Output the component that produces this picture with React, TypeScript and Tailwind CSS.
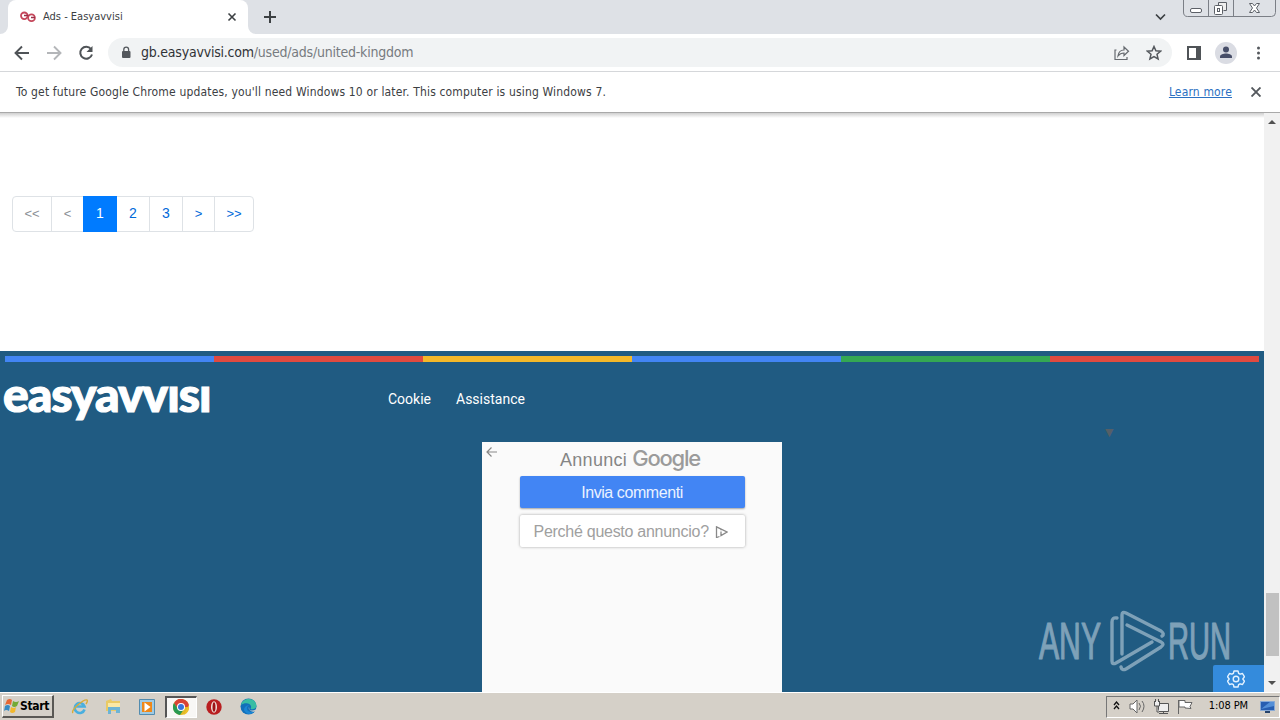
import React from "react";

const pages = [
  { label: "<<", look: "w-10 rounded-l-[4px] border-[#dee2e6] text-[13px] text-[#8b9096]" },
  { label: "<", look: "w-[33px] border-[#dee2e6] text-[13px] text-[#8b9096]" },
  { label: "1", look: "z-10 w-[34px] border-[#007bff] bg-[#007bff] text-[14px] text-white" },
  { label: "2", look: "w-[34px] border-[#dee2e6] text-[14px] text-[#0069d9]" },
  { label: "3", look: "w-[34px] border-[#dee2e6] text-[14px] text-[#0069d9]" },
  { label: ">", look: "w-[33px] border-[#dee2e6] text-[13px] text-[#0069d9]" },
  { label: ">>", look: "w-10 rounded-r-[4px] border-[#dee2e6] text-[13px] text-[#0069d9]" },
];

const stripes = ["bg-[#4285f4]", "bg-[#e04a3f]", "bg-[#f4b829]", "bg-[#4285f4]", "bg-[#34a853]", "bg-[#e04a3f]"];

function TabStrip() {
  return (
    <div className="flex h-[34px] shrink-0 bg-[#dee1e6] pl-2">
      <div className="relative flex h-[34px] w-[240px] items-center rounded-t-lg bg-white pl-3">
        <svg className="absolute -left-2 bottom-0" width="8" height="8"><path d="M8 0A8 8 0 0 1 0 8H8Z" fill="#fff" /></svg>
        <svg className="absolute -right-2 bottom-0" width="8" height="8"><path d="M0 0A8 8 0 0 0 8 8H0Z" fill="#fff" /></svg>
        <svg width="16" height="12" viewBox="0 0 16 12" fill="none" stroke="#c5475b" strokeWidth="1.800">
          <circle cx="4.300" cy="4.800" r="3.300" />
          <circle cx="11.500" cy="6.800" r="3.400" />
          <path d="M4 4.500h4.500M11 6.500h4" stroke="#9a3048" strokeWidth="1.500" />
        </svg>
        <span className="ml-[7px] w-[180px] font-['DejaVu_Sans_Condensed','Noto_Sans',sans-serif] text-[11px] whitespace-nowrap text-[#3c4043]">Ads - Easyavvisi</span>
        <svg className="ml-1" width="10" height="10" viewBox="0 0 10 10" stroke="#3c4043" strokeWidth="1.6"><path d="M1.500 1.500l7 7M8.500 1.500l-7 7" /></svg>
      </div>
      <svg className="mt-[11px] ml-4" width="12" height="12" stroke="#3c4043" strokeWidth="2"><path d="M6 0v12M0 6h12" /></svg>
      <svg className="mt-[13px] mr-px ml-auto" width="11" height="8" fill="none" stroke="#3c4043" strokeWidth="1.7"><path d="M1 1.500l4.500 4.500L10 1.500" /></svg>
      <svg className="mr-1 ml-4" width="93" height="18" fill="none" stroke="#7b7f86">
        <path d="M.5 0v12q0 4.500 4 4.500h84q4 0 4-4V0M25.500 0v16M50.500 0v16" />
        <g stroke="#5c6067">
          <rect x="7.500" y="8.500" width="11" height="4" rx="1.500" fill="#fff" />
          <path d="M35.500 5.500V2.500h8v8h-3" fill="#eee" />
          <rect x="31.500" y="5.500" width="8" height="9" rx="1" fill="#fff" />
          <rect x="34.500" y="8.500" width="2" height="3" />
          <path d="M66.500 3.500h3l2 2.500 2-2.500h3l-3 4.500 3 4.500h-3l-2-2.500-2 2.500h-3l3-4.500z" fill="#fff" />
        </g>
      </svg>
    </div>
  );
}

function Toolbar() {
  return (
    <div className="flex h-[38px] shrink-0 items-center border-b border-[#d5d7da] bg-white pl-[14px]">
      <svg width="16" height="16" viewBox="0 0 16 16" fill="none" stroke="#4f5357" strokeWidth="1.9"><path d="M15 8H2M8 1.500L1.500 8 8 14.500" /></svg>
      <svg className="ml-4" width="16" height="16" viewBox="0 0 16 16" fill="none" stroke="#b4b6b9" strokeWidth="1.9"><path d="M1 8h13M8 1.500L14.500 8 8 14.500" /></svg>
      <svg className="ml-4" width="16" height="16" viewBox="0 0 16 16" fill="none" stroke="#4f5357" strokeWidth="2">
        <path d="M13 4A6 6 0 1 0 14 9.500" /><path d="M14.500 1v6h-6z" fill="#4f5357" stroke="none" />
      </svg>
      <div className="ml-[14px] flex h-[29px] w-[1064px] items-center rounded-full bg-[#f1f3f4] pl-[13px]">
        <svg width="10" height="13" viewBox="0 0 10 13"><rect x="1" y="5" width="8.500" height="7" rx="1" fill="#54585d" /><path d="M2.800 5V3.500a2.400 2.400 0 0 1 4.800 0V5" fill="none" stroke="#54585d" strokeWidth="1.300" /></svg>
        <span className="ml-[10px] font-['DejaVu_Sans_Condensed','Noto_Sans',sans-serif] text-[14px] tracking-[-0.22px] whitespace-nowrap text-[#777b80]"><span className="text-[#303236]">gb.easyavvisi.com</span>/used/ads/united-kingdom</span>
        <svg className="ml-auto" width="16" height="16" viewBox="0 0 16 16" fill="none" stroke="#666a6f" strokeWidth="1.200">
          <path d="M2.500 5H1v9.500h12V12" /><path d="M4 11c.5-4 3-6 6-6V2l4.500 4.200L10 10.500V8C7.500 8 5.500 9 4 11z" />
        </svg>
        <svg className="mr-[10px] ml-[16px]" width="16" height="16" viewBox="0 0 16 16" fill="none" stroke="#54585d" strokeWidth="1.500"><path d="M8 1.500l1.900 4.300 4.700.4-3.600 3.100 1.100 4.600L8 11.500l-4.100 2.400L5 9.300 1.400 6.200l4.700-.4z" /></svg>
      </div>
      <svg className="ml-[15px]" width="14" height="14"><path d="M1 1h12v12H1z" fill="none" stroke="#4f5357" strokeWidth="2" /><path d="M9 0h5v14H9z" fill="#4f5357" /></svg>
      <svg className="ml-[14px]" width="22" height="22" viewBox="0 0 22 22"><circle cx="11" cy="11" r="11" fill="#dadce3" /><circle cx="11" cy="7.500" r="3" fill="#474e68" /><path d="M5 16v-1.500c0-2 3.500-3 6-3s6 1 6 3V16z" fill="#474e68" /></svg>
      <svg className="ml-[20px]" width="4" height="14" fill="#54585d"><circle cx="1.500" cy="2" r="1.500" /><circle cx="1.500" cy="7" r="1.500" /><circle cx="1.500" cy="12" r="1.500" /></svg>
    </div>
  );
}

function UpdateBar() {
  return (
    <div className="flex h-[41px] shrink-0 items-center border-b border-[#a9a9a9] bg-white pr-[19px] pl-4 font-['DejaVu_Sans_Condensed','Noto_Sans',sans-serif] text-[12px]">
      <span className="tracking-[0.16px] whitespace-nowrap text-[#3c4043]">To get future Google Chrome updates, you'll need Windows 10 or later. This computer is using Windows 7.</span>
      <span className="mr-[19px] ml-auto tracking-[0.16px] whitespace-nowrap text-[#2b70c2] underline">Learn more</span>
      <svg width="10" height="10" stroke="#54585d" strokeWidth="1.900"><path d="M.5.5l9 9M9.500.5l-9 9" /></svg>
    </div>
  );
}

function AdBox() {
  return (
    <div className="mt-[23px] ml-[482px] flex h-[250px] w-[300px] flex-col items-center bg-[#fafafa] font-['Liberation_Sans',sans-serif]">
      <div className="flex h-[34px] w-full pt-1 pl-1">
        <svg className="mt-[1px]" width="11" height="10" fill="none" stroke="#888" strokeWidth="1.200"><path d="M11 5H1M5.500.5L1 5l4.500 4.500" /></svg>
        <div className="-mt-px ml-[63px] flex items-baseline whitespace-nowrap text-[#858585]">
          <span className="text-[18px] tracking-[0.3px]">Annunci</span>
          <span className="ml-[5px] font-[Inter,sans-serif] text-[22px] leading-[26px] font-medium tracking-[-1.200px] text-[#9b9b9b]">Google</span>
        </div>
      </div>
      <div className="flex h-8 w-[225px] items-center justify-center rounded-[2px] bg-[#4285f4] pt-px text-[16px] tracking-[-0.42px] text-[#eaf2ff] shadow-[0_1px_2px_rgba(0,0,0,0.35)]">Invia commenti</div>
      <div className="mt-[7px] flex h-8 w-[225px] items-center rounded-[2px] bg-white pt-px pl-[14px] text-[16px] tracking-[-0.27px] whitespace-nowrap text-[#a0a0a0] shadow-[0_0_3px_rgba(0,0,0,0.35)]">
        Perché questo annuncio?
        <svg className="ml-[6px]" width="13" height="12" fill="none" stroke="#888" strokeWidth="1.300"><path d="M4.500 10.500L1.500 11.500V.8L12 6 6 9.500V5.500M6 3v1.200" /></svg>
      </div>
    </div>
  );
}

function Watermark() {
  return (
    <div className="absolute top-[496px] left-[1036px] opacity-55">
      <svg width="204" height="66" viewBox="-2 0 204 66" fill="none" stroke="#cbdbe5" strokeWidth="3.400" strokeLinecap="round" strokeLinejoin="round">
        <g fill="#cbdbe5" stroke="#cbdbe5" strokeWidth="1.200" fontFamily="Liberation Sans Narrow, Liberation Sans" fontSize="51">
          <text x="1" y="49.500" textLength="62" lengthAdjust="spacingAndGlyphs">ANY</text>
          <text x="130" y="49.500" textLength="63" lengthAdjust="spacingAndGlyphs">RUN</text>
        </g>
        <path d="M79 9q-5-1-5 4v39q0 4 4 2l36-21" />
        <path d="M84 45V6q0-4 4-2l35 18q4 3 1 5" />
        <path d="M89 16l34 17q4 2 0 5L88 60q-4 2-5-2" />
      </svg>
    </div>
  );
}

function PageView() {
  return (
    <div className="relative flex h-[579px] w-[1264px] flex-col overflow-hidden bg-white">
      <div className="h-[5px] shrink-0 bg-linear-to-b from-[#cfcfcf] to-white" />
      <div className="mt-[78px] ml-[13px] flex h-9 shrink-0 font-['Liberation_Sans',sans-serif]">
        {pages.map((p) => (
          <div key={p.label} className={"-ml-px flex h-9 shrink-0 items-center justify-center border pb-px " + p.look}>{p.label}</div>
        ))}
      </div>
      <div className="mt-[119px] flex h-[341px] shrink-0 flex-col bg-[#205b82] pt-[5px]">
        <div className="ml-[5px] flex h-[6px] w-[1254px] shrink-0">
          {stripes.map((s, i) => <div key={i} className={"flex-1 " + s} />)}
        </div>
        <div className="flex h-[57px] shrink-0 pt-[19px] pl-[3px] text-white">
          <div className="-mt-[3px] w-[385px] font-[Lato,sans-serif] text-[48px] leading-[32px] font-black tracking-[-1px] [-webkit-text-stroke:1.2px_white]">easyavv&#305;s&#305;</div>
          <div className="flex gap-[25px] pt-[10px] font-[Roboto,sans-serif] text-[14px] leading-4">
            <span>Cookie</span>
            <span>Assistance</span>
          </div>
        </div>
        <AdBox />
      </div>
      <span className="absolute top-[314px] left-[1105px] font-['DejaVu_Sans',sans-serif] text-[11px] leading-3 text-[#555f67]">▼</span>
      <Watermark />
      <div className="absolute right-0 bottom-0 flex h-[27px] w-[51px] items-center justify-center rounded-tl-[2px] bg-[#348bdc] pr-[5px]">
        <svg width="18" height="18" viewBox="0 0 18 18" fill="none" stroke="#e4f2ff" strokeWidth="1.400" strokeLinejoin="round">
          <path d="M7 1h4l.6 2.300 1.500.9 2.400-.7 2 3.300L15.800 9l1.700 2.200-2 3.300-2.400-.7-1.500.9L11 17H7l-.6-2.300-1.500-.9-2.400.7-2-3.300L2.200 9 .5 6.800l2-3.300 2.400.7 1.500-.9z" /><circle cx="9" cy="9" r="2.800" />
        </svg>
      </div>
    </div>
  );
}

function Scrollbar() {
  return (
    <div className="flex h-[579px] w-4 flex-col items-center bg-[#f1f1f1]">
      <svg className="mt-[7px]" width="8" height="4"><path d="M0 4l4-4 4 4z" fill="#505050" /></svg>
      <div className="mt-[469px] h-[63px] w-[13px] bg-[#c1c1c1]" />
      <svg className="mt-[25px]" width="8" height="4"><path d="M0 0l4 4 4-4z" fill="#505050" /></svg>
    </div>
  );
}

function Taskbar() {
  return (
    <div className="flex h-[28px] shrink-0 items-center border-t border-white bg-[#d5d0c8] pl-[2px] font-['DejaVu_Sans_Condensed','Noto_Sans',sans-serif]">
      <div className="flex h-[23px] w-[52px] items-center border-t border-r-2 border-b-2 border-l border-t-white border-r-[#5a5854] border-b-[#5a5854] border-l-white">
        <svg width="17" height="17" viewBox="0 0 17 17"><path d="M4 2q3-2 5 0L8 7Q5 5 2 7z" fill="#e66734" /><path d="M10 3q3 2 6 0l-2 5q-3 2-5 0z" fill="#73aa36" /><path d="M2 8q3-2 5 0l-1 5q-3-2-5 0z" fill="#368ac4" /><path d="M8 9q3 2 5 0l-1 5q-3 2-5 0z" fill="#f2b82d" /></svg>
        <span className="text-[12px] font-bold tracking-[-0.3px]">Start</span>
      </div>
      <svg className="ml-[17px]" width="17" height="17" viewBox="0 0 17 17" fill="none"><path d="M13.500 11.500A5 5 0 1 1 13.500 8.500H5" stroke="#4aafdf" strokeWidth="2.600" /><path d="M2 15c-3-3 11-14 14-13q1 1-1 4" stroke="#d9ac37" strokeWidth="1.400" /></svg>
      <svg className="ml-[17px]" width="17" height="17" viewBox="0 0 17 17"><path d="M1 3l5-2 1 2h8v10H1z" fill="#e9ca66" /><path d="M3 5h12v7H3z" fill="#f9e8a6" /><path d="M3 9h12v6h-4v-3H6v4H3z" fill="#6db4d5" /></svg>
      <svg className="ml-[17px]" width="16" height="16"><path d="M.5.5h15v15H.5z" fill="#9fcae3" stroke="#538caf" /><path d="M3 3h10v10H3z" fill="#ef8818" /><path d="M5.500 3.500v9l6-4.500z" fill="#fff" /></svg>
      <div className="ml-[10px] flex h-[22px] w-[32px] items-center justify-center border-t-2 border-r border-b border-l-2 border-t-[#555] border-r-white border-b-white border-l-[#555] bg-[#f8f7f5] pr-px">
        <svg width="16" height="16" viewBox="0 0 16 16"><circle cx="8" cy="8" r="8" fill="#e2ba27" /><path d="M8 8H16A8 8 0 0 0 1 4l4 6z" fill="#d84335" /><path d="M8 6h7.600L11 16a8 8 0 0 0 4.600-10z" fill="#efc22e" /><path d="M1 4a8 8 0 0 0 6 12l4-6H5z" fill="#299951" /><circle cx="8" cy="8" r="4" fill="#fff" /><circle cx="8" cy="8" r="3" fill="#3775db" /></svg>
      </div>
      <svg className="ml-[9px]" width="16" height="16" viewBox="0 0 16 16"><circle cx="8" cy="8" r="7.700" fill="#b91e20" /><ellipse cx="8" cy="8" rx="3" ry="5.700" fill="#f1e4de" /><ellipse cx="8" cy="8" rx="1.500" ry="4.800" fill="#9c1215" /></svg>
      <svg className="ml-[18px]" width="17" height="17" viewBox="0 0 17 17"><circle cx="8.500" cy="8.500" r="8" fill="#126fb9" /><path d="M1 7C3-1 16-1 16.500 8q-1 4-6 3c3-5-5-8-9.500-4z" fill="#38bda4" /><path d="M7 9c-1 4 3 6 8 4-3 4-9 4-11-1q0-4 5-5z" fill="#1b86d4" /><path d="M9 9q-1 3 2 3.500 4 .5 6-2.500v2l-2 1.500q-6 1-6-4.500z" fill="#d5d0c8" /></svg>
      <div className="ml-auto flex h-[22px] w-[174px] items-center border border-t-[#777] border-r-white border-b-white border-l-[#777] pl-[6px]">
        <svg className="-mt-[2px]" width="7" height="9" fill="none" stroke="#111" strokeWidth="1.300"><path d="M1 4l2.500-3L6 4M1 8l2.500-3L6 8" /></svg>
        <svg className="ml-[9px]" width="17" height="15" fill="#fff" stroke="#666"><path d="M1 5h3l4-4v13l-4-4H1z" /><path d="M10 4q3 3 0 7M13 2q4 5 0 11" fill="none" /></svg>
        <svg className="ml-[7px]" width="17" height="16" fill="#eee" stroke="#555"><path d="M5.500 4.500h10v8h-10zM6 14.500h9M10.500 13v2" /><path d="M1.500 2v5h5V2M2.500 0v3M5.500 0v3M4 7v6h2" /></svg>
        <svg className="ml-[7px]" width="17" height="16" fill="#fff" stroke="#666"><path d="M1.500 1v14M2 1.500h6v2h7l-2 4 1 2-6-.5v-1H2z" /></svg>
        <span className="ml-auto text-[11px] tracking-[-0.100px] whitespace-nowrap">1:08 PM</span>
        <svg className="mr-1 ml-3" width="15" height="14"><path d="M.5 1.500h14v9H.5z" fill="#285eb1" stroke="#87a9d6" /><path d="M1 9L10 2h4v4z" fill="#548fd7" /><path d="M5 11h5v2H5z" fill="#26436b" /></svg>
      </div>
    </div>
  );
}

export default function App() {
  return (
    <div className="flex h-[720px] w-[1280px] flex-col overflow-hidden bg-white">
      <TabStrip />
      <Toolbar />
      <UpdateBar />
      <div className="flex h-[579px] shrink-0">
        <PageView />
        <Scrollbar />
      </div>
      <Taskbar />
    </div>
  );
}
